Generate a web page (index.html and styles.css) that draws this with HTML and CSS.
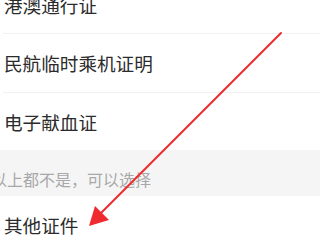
FILE: index.html
```html
<!DOCTYPE html>
<html lang="zh-CN">
<head>
<meta charset="utf-8">
<link rel="stylesheet" href="styles.css">
</head>
<body>
<div class="page">
  <div class="list">
    <div class="row">港澳通行证</div>
    <div class="row">民航临时乘机证明</div>
    <div class="row row-last">电子献血证</div>
    <div class="section"><span class="section-text">以上都不是，可以选择</span></div>
    <div class="row row-other">其他证件</div>
  </div>
  <svg class="arrow" width="320" height="240" viewBox="0 0 320 240">
    <line x1="281" y1="33" x2="101" y2="213" stroke="#ef2b2f" stroke-width="2" stroke-linecap="round"/>
    <polygon points="89,226 95,206 109,220" fill="#ef2b2f"/>
  </svg>
</div>
</body>
</html>
```
FILE: styles.css
```css
html, body {
  margin: 0;
  padding: 0;
  background: #ffffff;
}
.page {
  position: relative;
  width: 320px;
  height: 240px;
  overflow: hidden;
  font-family: "Noto Sans CJK SC", "Noto Sans", sans-serif;
}
.list {
  display: flex;
  flex-direction: column;
  margin-top: -24px;
}
.row {
  height: 58px;
  line-height: 58px;
  font-size: 18.6px;
  color: #2b2b2b;
  margin-left: 3px;
  padding-left: 1px;
  border-bottom: 1px solid #f1f1f1;
  white-space: nowrap;
}
.row:first-child {
  height: 57px;
}
.row-last {
  height: 57px;
  line-height: 57px;
  border-bottom: none;
}
.section {
  height: 46px;
  background: #f5f5f5;
  display: flex;
  align-items: center;
  padding-top: 12px;
  box-sizing: border-box;
}
.section-text {
  font-size: 16px;
  color: #a8a8a8;
  margin-left: -9px;
  white-space: nowrap;
}
.row-other {
  height: 60px;
  line-height: 58px;
  border-bottom: none;
}
.arrow {
  position: absolute;
  left: 0;
  top: 0;
}
```
